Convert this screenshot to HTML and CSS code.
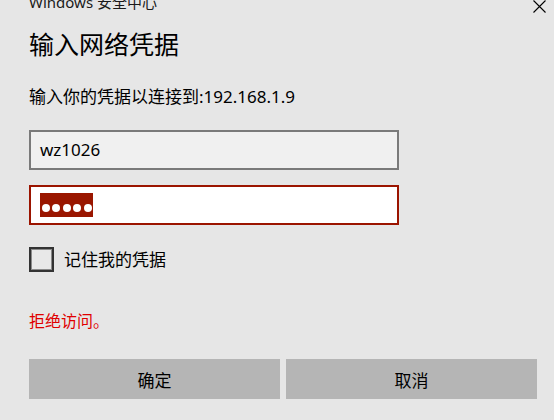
FILE: index.html
```html
<!DOCTYPE html>
<html lang="zh-CN">

<head>
  <meta charset="UTF-8" />
  <meta name="viewport" content="width=device-width, initial-scale=1.0" />
  <title>Windows 安全中心</title>
  <link rel="stylesheet" href="styles.css">
</head>

<body>
  <div class="dialog">
    <!-- Title bar -->
    <div class="titlebar">
      <div class="app-name">Windows 安全中心</div>
      <svg class="close" width="13" height="13" viewBox="0 0 13 13">
        <path d="M0.5 0.5 L12.5 12.5 M12.5 0.5 L0.5 12.5" stroke="#000" stroke-width="1.1" fill="none" />
      </svg>
    </div>

    <h1 class="heading">输入网络凭据</h1>
    <p class="subtitle">输入你的凭据以连接到:192.168.1.9</p>

    <!-- Credentials -->
    <div class="field user">wz1026</div>
    <div class="field password">
      <span class="selected">
        <span class="dot"></span>
        <span class="dot"></span>
        <span class="dot"></span>
        <span class="dot"></span>
        <span class="dot"></span>
      </span>
    </div>

    <label class="remember">
      <span class="checkbox"></span>
      <span>记住我的凭据</span>
    </label>

    <p class="error">拒绝访问。</p>

    <div class="buttons">
      <button class="btn">确定</button>
      <button class="btn">取消</button>
    </div>
  </div>
</body>

</html>
```

FILE: styles.css
```css
* {
  margin: 0;
  padding: 0;
  box-sizing: border-box;
}

body {
  background-color: #e6e6e6;
  color: #000;
  font-family: "Noto Sans", "Noto Sans CJK SC", sans-serif;
  font-size: 17px;
  overflow: hidden;
}

.dialog {
  display: flex;
  flex-direction: column;
  align-items: flex-start;
  padding: 0 17px 0 29px;
  margin-top: -5px;
}

/* Title bar */
.titlebar {
  display: flex;
  justify-content: space-between;
  align-self: stretch;
  height: 14px;
}

.app-name {
  font-size: 15px;
  line-height: 14px;
  color: #1a1a1a;
}

.close {
  margin-top: 5px;
  margin-right: -9px;
}

.heading {
  font-size: 25px;
  font-weight: normal;
  line-height: 28px;
  margin-top: 21px;
}

.subtitle {
  font-size: 17px;
  line-height: 20px;
  margin-top: 29px;
}

/* Fields */
.field {
  width: 370px;
  height: 40px;
  border: 2px solid #7a7a7a;
  display: flex;
  align-items: center;
  padding-left: 9px;
  line-height: 20px;
}

.user {
  background-color: #f0f0f0;
  margin-top: 23px;
}

.password {
  background-color: #fff;
  border-color: #9b1400;
  margin-top: 15px;
}

.selected {
  display: flex;
  align-items: flex-end;
  gap: 2.5px;
  height: 24px;
  padding: 0 1.5px 5px;
  background-color: #9a1600;
}

.dot {
  width: 8px;
  height: 8px;
  border-radius: 50%;
  background-color: #fff;
}

/* Checkbox */
.remember {
  display: flex;
  align-items: center;
  gap: 10px;
  margin-top: 22px;
  line-height: 25px;
}

.checkbox {
  width: 25px;
  height: 25px;
  border: 2px solid #333;
  box-shadow: inset 0 0 0 1px #8a8a8a;
  background-color: #e8e8e8;
}

.error {
  color: #e00000;
  font-size: 16px;
  line-height: 20px;
  margin-top: 39px;
}

/* Buttons */
.buttons {
  display: flex;
  gap: 6px;
  align-self: stretch;
  margin-top: 28px;
}

.btn {
  flex: 1;
  height: 40px;
  border: none;
  background-color: #b5b5b5;
  color: #000;
  font-family: "Noto Sans", "Noto Sans CJK SC", sans-serif;
  font-size: 17px;
}
```
